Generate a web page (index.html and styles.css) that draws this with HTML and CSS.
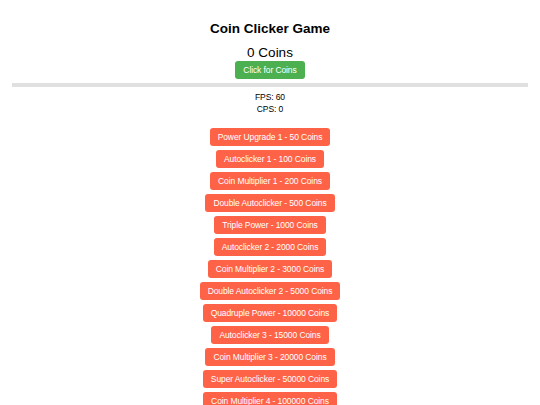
FILE: index.html
```html
<!DOCTYPE html>
<html>
<head>
<meta charset="utf-8">
<title>Coin Clicker Game</title>
<link rel="stylesheet" href="styles.css">
</head>
<body>
<div class="page">
  <h1 class="title">Coin Clicker Game</h1>
  <div class="coins">0 Coins</div>
  <button class="click-btn">Click for Coins</button>
  <div class="divider"></div>
  <div class="stats">
    <div class="stat">FPS: 60</div>
    <div class="stat">CPS: 0</div>
  </div>
  <div class="shop">
    <button class="shop-btn">Power Upgrade 1 - 50 Coins</button>
    <button class="shop-btn">Autoclicker 1 - 100 Coins</button>
    <button class="shop-btn">Coin Multiplier 1 - 200 Coins</button>
    <button class="shop-btn">Double Autoclicker - 500 Coins</button>
    <button class="shop-btn">Triple Power - 1000 Coins</button>
    <button class="shop-btn">Autoclicker 2 - 2000 Coins</button>
    <button class="shop-btn">Coin Multiplier 2 - 3000 Coins</button>
    <button class="shop-btn">Double Autoclicker 2 - 5000 Coins</button>
    <button class="shop-btn">Quadruple Power - 10000 Coins</button>
    <button class="shop-btn">Autoclicker 3 - 15000 Coins</button>
    <button class="shop-btn">Coin Multiplier 3 - 20000 Coins</button>
    <button class="shop-btn">Super Autoclicker - 50000 Coins</button>
    <button class="shop-btn">Coin Multiplier 4 - 100000 Coins</button>
  </div>
</div>
</body>
</html>
```
FILE: styles.css
```css
html, body {
  margin: 0;
  padding: 0;
  background: #ffffff;
}
body {
  font-family: "Liberation Sans", Arial, sans-serif;
  color: #000;
}
.page {
  padding: 21px 12px 0;
  display: flex;
  flex-direction: column;
  align-items: center;
  text-align: center;
}
.title {
  margin: 0;
  font-size: 13.5px;
  line-height: 16px;
  font-weight: bold;
}
.coins {
  margin-top: 8px;
  font-size: 13.5px;
  line-height: 16px;
}
.click-btn {
  height: 18px;
  padding: 0 8px;
  border: none;
  border-radius: 3px;
  background: #4caf50;
  color: #fff;
  font-family: "Liberation Sans", Arial, sans-serif;
  font-size: 8.5px;
  letter-spacing: -0.1px;
  line-height: 18px;
}
.divider {
  align-self: stretch;
  height: 4px;
  margin-top: 4px;
  background: #e0e0e0;
}
.stats {
  margin-top: 4px;
}
.stat {
  font-size: 8.5px;
  letter-spacing: -0.1px;
  line-height: 12px;
}
.shop {
  margin-top: 13px;
  display: flex;
  flex-direction: column;
  align-items: center;
  gap: 4px;
}
.shop-btn {
  height: 18px;
  padding: 0 8px;
  border: none;
  border-radius: 3px;
  background: #ff6347;
  color: #fff;
  font-family: "Liberation Sans", Arial, sans-serif;
  font-size: 8.5px;
  letter-spacing: -0.1px;
  line-height: 18px;
}
```
